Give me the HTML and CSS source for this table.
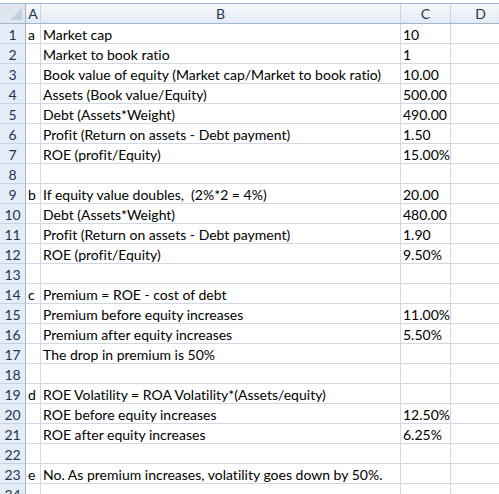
FILE: index.html
```html
<!DOCTYPE html>
<html>
<head>
<meta charset="utf-8">
<link rel="stylesheet" href="styles.css">
</head>
<body>
<div class="sheet">
  <div class="hdr corner"><span class="tri"></span></div>
  <div class="hdr col">A</div>
  <div class="hdr col">B</div>
  <div class="hdr col">C</div>
  <div class="hdr col">D</div>

  <div class="rh">1</div><div class="c">a</div><div class="c">Market cap</div><div class="c">10</div><div class="c"></div>
  <div class="rh">2</div><div class="c"></div><div class="c">Market to book ratio</div><div class="c">1</div><div class="c"></div>
  <div class="rh">3</div><div class="c"></div><div class="c">Book value of equity (Market cap/Market to book ratio)</div><div class="c">10.00</div><div class="c"></div>
  <div class="rh">4</div><div class="c"></div><div class="c">Assets (Book value/Equity)</div><div class="c">500.00</div><div class="c"></div>
  <div class="rh">5</div><div class="c"></div><div class="c">Debt (Assets*Weight)</div><div class="c">490.00</div><div class="c"></div>
  <div class="rh">6</div><div class="c"></div><div class="c">Profit (Return on assets - Debt payment)</div><div class="c">1.50</div><div class="c"></div>
  <div class="rh">7</div><div class="c"></div><div class="c">ROE (profit/Equity)</div><div class="c">15.00%</div><div class="c"></div>
  <div class="rh">8</div><div class="c"></div><div class="c"></div><div class="c"></div><div class="c"></div>
  <div class="rh">9</div><div class="c">b</div><div class="c">If equity value doubles,&nbsp; (2%*2 = 4%)</div><div class="c">20.00</div><div class="c"></div>
  <div class="rh">10</div><div class="c"></div><div class="c">Debt (Assets*Weight)</div><div class="c">480.00</div><div class="c"></div>
  <div class="rh">11</div><div class="c"></div><div class="c">Profit (Return on assets - Debt payment)</div><div class="c">1.90</div><div class="c"></div>
  <div class="rh">12</div><div class="c"></div><div class="c">ROE (profit/Equity)</div><div class="c">9.50%</div><div class="c"></div>
  <div class="rh">13</div><div class="c"></div><div class="c"></div><div class="c"></div><div class="c"></div>
  <div class="rh">14</div><div class="c">c</div><div class="c">Premium = ROE - cost of debt</div><div class="c"></div><div class="c"></div>
  <div class="rh">15</div><div class="c"></div><div class="c">Premium before equity increases</div><div class="c">11.00%</div><div class="c"></div>
  <div class="rh">16</div><div class="c"></div><div class="c">Premium after equity increases</div><div class="c">5.50%</div><div class="c"></div>
  <div class="rh">17</div><div class="c"></div><div class="c">The drop in premium is 50%</div><div class="c"></div><div class="c"></div>
  <div class="rh">18</div><div class="c"></div><div class="c"></div><div class="c"></div><div class="c"></div>
  <div class="rh">19</div><div class="c">d</div><div class="c">ROE Volatility = ROA Volatility*(Assets/equity)</div><div class="c"></div><div class="c"></div>
  <div class="rh">20</div><div class="c"></div><div class="c">ROE before equity increases</div><div class="c">12.50%</div><div class="c"></div>
  <div class="rh">21</div><div class="c"></div><div class="c">ROE after equity increases</div><div class="c">6.25%</div><div class="c"></div>
  <div class="rh">22</div><div class="c"></div><div class="c"></div><div class="c"></div><div class="c"></div>
  <div class="rh">23</div><div class="c">e</div><div class="c span">No. As premium increases, volatility goes down by 50%.</div><div class="c"></div><div class="c"></div>
  <div class="rh">24</div><div class="c"></div><div class="c"></div><div class="c"></div><div class="c"></div>
</div>
</body>
</html>
```
FILE: styles.css
```css
html, body {
  margin: 0;
  padding: 0;
  background: #ffffff;
  overflow: hidden;
}
body {
  padding-top: 3px;
  font-family: Lato, "Open Sans", sans-serif;
  font-size: 14px;
  font-variant-ligatures: none;
  color: #000000;
}
.sheet {
  display: grid;
  grid-template-columns: 26px 15px 360px 50px 60px;
  grid-template-rows: 21px;
  grid-auto-rows: 20px;
  width: 511px;
}
.hdr {
  box-sizing: border-box;
  border-top: 1px solid #9eb6ce;
  border-bottom: 1px solid #9eb6ce;
  border-right: 1px solid #c5d3e5;
  background: linear-gradient(#f6f8fb, #e4eaf3);
  color: #1f3550;
  display: flex;
  align-items: center;
  justify-content: center;
  line-height: 1;
  padding-top: 1px;
}
.corner {
  position: relative;
  background: #dfe6f0;
  border-right: 1px solid #9eb6ce;
}
.tri {
  position: absolute;
  right: 3px;
  bottom: 3px;
  width: 0;
  height: 0;
  border-left: 12px solid transparent;
  border-bottom: 12px solid #c3cfdd;
}
.rh {
  box-sizing: border-box;
  background: #e4ecf7;
  border-right: 1px solid #9eb6ce;
  border-bottom: 1px solid #c5d3e5;
  color: #1f3550;
  text-align: center;
  line-height: 19px;
  padding-top: 1px;
}
.c {
  box-sizing: border-box;
  border-right: 1px solid #d0d7e5;
  border-bottom: 1px solid #d0d7e5;
  padding: 1px 0 0 2px;
  line-height: 19px;
  white-space: nowrap;
  overflow: visible;
}
.span {
  position: relative;
  z-index: 1;
}
```
